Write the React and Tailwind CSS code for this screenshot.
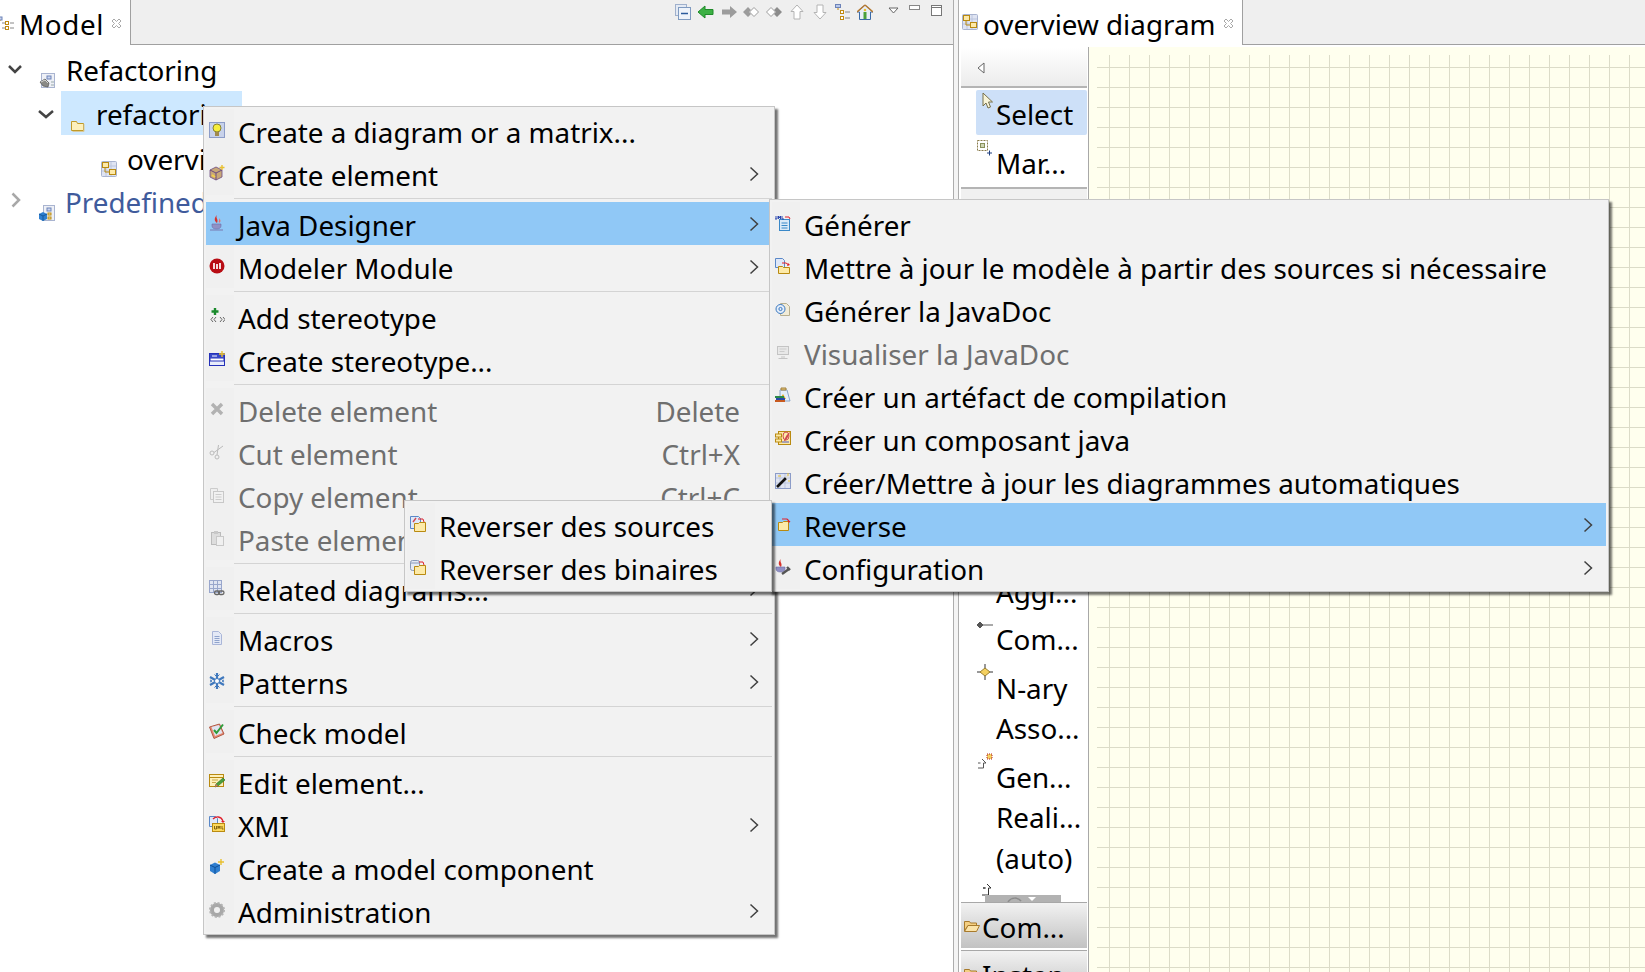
import React from 'react';

// small 16x16 icons, drawn by hand to follow the Modelio ones
const Svg = ({ s = 16, className = '', children }) => (
  <svg width={s} height={s} viewBox="0 0 16 16" className={'block shrink-0 ' + className}>{children}</svg>
);

const DiagramIcon = () => (
  <Svg>
    <rect x=".5" y=".5" width="15" height="15" rx="1" fill="#dfe4f2" stroke="#a9b4d0" />
    <path d="M5 1v14M10 1v14M1 5h14M1 10h14" stroke="#bcc6de" />
    <rect x="1.5" y="1.5" width="6" height="5" fill="#fde9a8" stroke="#b98a10" />
    <rect x="8.5" y="8.5" width="6" height="5" fill="#fde9a8" stroke="#b98a10" />
    <path d="M4 7v4h4" fill="none" stroke="#b98a10" />
  </Svg>
);
const ModelIcon = () => (
  <Svg>
    <rect x="2.5" y="1.5" width="13" height="14" fill="#eef0f6" stroke="#a9b4d0" />
    <rect x="8" y="4" width="4" height="3" fill="#cbd5ee" stroke="#6d83b8" />
    <path d="M1 10l5-3 4 4-1 4-5-1z" fill="#8a8a86" stroke="#555" strokeWidth=".7" />
    <path d="M2 10l4-2 3 3" fill="none" stroke="#d8d8d4" />
    <path d="M12 10h3M12 13h3" stroke="#9aa" />
  </Svg>
);
const PredefIcon = () => (
  <Svg>
    <rect x="4.5" y=".5" width="11" height="15" fill="#eef0f6" stroke="#a9b4d0" />
    <rect x="8" y="3" width="4" height="3" fill="#cbd5ee" stroke="#6d83b8" />
    <rect x="9" y="8" width="3" height="2" fill="#fde9a8" stroke="#b98a10" />
    <rect x="9" y="12" width="3" height="2" fill="#fde9a8" stroke="#b98a10" />
    <path d="M0 9l4-2 4 2v5l-4 2-4-2z" fill="#2f7fd0" />
    <path d="M0 9l4 2 4-2M4 11v5" fill="none" stroke="#155a9e" />
  </Svg>
);
const FolderIcon = ({ s = 16 }) => (
  <Svg s={s}>
    <path d="M1.5 4.5v9h12v-7h-6l-1-2z" fill="#fdf0bb" stroke="#c09a28" />
    <path d="M14 7v7.5H2.5" fill="none" stroke="#d8c998" />
  </Svg>
);
const OpenFolderIcon = () => (
  <Svg>
    <path d="M.5 3.500h5l1 1.500h6v2.500H4L.5 13z" fill="#f4cf82" stroke="#a87a2c" />
    <path d="M.5 13.500L4 7.500h11.500l-3 6z" fill="#fbe3a8" stroke="#a87a2c" />
  </Svg>
);
const ModelTabIcon = () => (
  <svg width="16" height="16" viewBox="0 0 16 16" className="block shrink-0">
    <rect x="-3" y="1" width="5" height="3" fill="#cbd5ee" stroke="#6d83b8" />
    <path d="M0 4v1" stroke="#c09a28" />
    <rect x="5.5" y="5.5" width="3" height="3" fill="#fff" stroke="#c08a10" />
    <rect x="5.5" y="10.5" width="3" height="3" fill="#fff" stroke="#c08a10" />
    <path d="M10 7h4M10 12h4M2 7h3M2 12h3" stroke="#888" />
  </svg>
);

const icons = {
  bulb: (
    <Svg>
      <rect x=".5" y=".5" width="15" height="15" fill="#c8d2ea" stroke="#8c9cc8" />
      <circle cx="8" cy="6" r="4" fill="#f6ee3c" stroke="#8a8330" />
      <rect x="6" y="10" width="4" height="4" fill="#a08a50" />
    </Svg>
  ),
  box: (
    <Svg>
      <path d="M1 5l6-3 6 3v7l-6 3-6-3z" fill="#c8a878" stroke="#6b4a80" strokeWidth=".8" />
      <path d="M1 5l6 3 6-3M7 8v7" fill="none" stroke="#6b4a80" />
      <path d="M3 10l3 2" stroke="#f4d04a" strokeWidth="2" />
      <path d="M13 0v5M10.5 2.5h5" stroke="#e8c030" strokeWidth="1.4" />
    </Svg>
  ),
  java: (
    <Svg>
      <path d="M8 0c-2 3 2 4 0 8-3-2-3-5 0-8z" fill="#d8322c" />
      <path d="M10 3c1 2-1 3 0 5 2-1 2-3 0-5z" fill="#e8736c" />
      <path d="M3 9h9v2c0 2-2 3-4.500 3S3 13 3 11z" fill="#9090c4" stroke="#6c6ca8" strokeWidth=".6" />
      <path d="M1 15h13" stroke="#7878b0" />
    </Svg>
  ),
  modeler: (
    <Svg>
      <circle cx="8" cy="8" r="7.500" fill="#b80d14" />
      <path d="M5 5v6M8 6v5M11 5v6" stroke="#fff" strokeWidth="1.700" />
    </Svg>
  ),
  addStereo: (
    <Svg>
      <path d="M6 0v7M2.500 3.500h7" stroke="#1a8a2c" strokeWidth="2.400" />
      <path d="M4 9l-2 2.500 2 2.500M7 9l-2 2.500 2 2.500M11 9l2 2.500-2 2.500M14 9l2 2.500-2 2.500" fill="none" stroke="#666" />
    </Svg>
  ),
  createStereo: (
    <Svg>
      <rect x=".5" y="2.500" width="15" height="12" fill="#e8ecfa" stroke="#2430b8" />
      <rect x="1" y="7" width="14" height="3" fill="#fff" stroke="#2430b8" />
      <rect x="1" y="3" width="14" height="4" fill="#3848c8" />
      <path d="M3 5h5" stroke="#fff" />
      <path d="M13 0v6M10 3h6" stroke="#e8c030" strokeWidth="1.400" />
    </Svg>
  ),
  del: <Svg><path d="M3 3l10 10M13 3L3 13" stroke="#b2b2b2" strokeWidth="3.400" /></Svg>,
  cut: (
    <Svg>
      <circle cx="3" cy="9" r="2" fill="none" stroke="#bbb" />
      <circle cx="8" cy="13" r="2" fill="none" stroke="#bbb" />
      <path d="M5 8.500L14 2M8 11L9.500 1" stroke="#bbb" />
    </Svg>
  ),
  copy: (
    <Svg>
      <path d="M1.500 1.500h7v3M1.500 1.500v11h3" fill="#eee" stroke="#ccc" />
      <rect x="4.500" y="4.500" width="10" height="11" fill="#f1f1f1" stroke="#c8c8c8" />
      <path d="M6.500 7.500h6M6.500 10h6M6.500 12.500h6" stroke="#ccc" />
    </Svg>
  ),
  paste: (
    <Svg>
      <rect x="2.500" y="2.500" width="9" height="12" fill="#ddd" stroke="#bbb" />
      <rect x="5" y="1" width="4" height="3" fill="#c8c8c8" />
      <rect x="7.500" y="6.500" width="7" height="9" fill="#f0f0f0" stroke="#c8c8c8" />
    </Svg>
  ),
  related: (
    <Svg>
      <rect x=".5" y=".5" width="12" height="12" fill="#dfe4f2" stroke="#98a6cc" />
      <path d="M4.500 1v11M8.500 1v11M1 4.500h11M1 8.500h11" stroke="#98a6cc" />
      <rect x="5.500" y="11" width="5" height="3.500" rx="1.700" fill="none" stroke="#666" strokeWidth="1.300" />
      <rect x="9.500" y="11" width="5.500" height="3.500" rx="1.700" fill="none" stroke="#666" strokeWidth="1.300" />
    </Svg>
  ),
  macros: (
    <Svg>
      <path d="M3.500 1.500h6l3 3v10h-9z" fill="#e4e9f6" stroke="#aab6d8" />
      <path d="M5.500 6.500h5M5.500 8.500h5M5.500 10.500h5M5.500 12.500h5" stroke="#8fa3cc" />
    </Svg>
  ),
  patterns: (
    <Svg>
      <path d="M8 0v16M1 4l14 8M15 4L1 12" stroke="#3f78bd" strokeWidth="2.200" />
      <circle cx="8" cy="8" r="2.500" fill="#fff" stroke="#3f78bd" />
      <path d="M5.500 1.500l2.500 2.500 2.500-2.500M5.500 14.500l2.500-2.500 2.500 2.500M1 7l2 1-2 1M15 7l-2 1 2 1" fill="none" stroke="#3f78bd" />
    </Svg>
  ),
  check: (
    <Svg>
      <path d="M.5 4l10-3 4.500 10-10 4.500z" fill="#e88a70" stroke="#b05a48" />
      <path d="M2.500 4l7.500-2 3.500 8-7.500 3z" fill="#dfe4f2" />
      <path d="M5 7l2.500 3L14 1.500" fill="none" stroke="#2f9d3a" strokeWidth="2" />
    </Svg>
  ),
  edit: (
    <Svg>
      <rect x=".5" y="1.500" width="14" height="12" fill="#fdf0bb" stroke="#b98a10" />
      <path d="M1 4.500h13" stroke="#b98a10" />
      <path d="M3 7h6M3 9.500h4" stroke="#c9a94a" />
      <path d="M6 14l1-3 7-6 2 2-7 6z" fill="#4aa03c" stroke="#2c6a24" strokeWidth=".6" />
      <path d="M6 14l1-3 2 2z" fill="#e87060" />
    </Svg>
  ),
  xmi: (
    <Svg>
      <path d="M.5.500h6l2 2v8h-8z" fill="#dfe8f8" stroke="#5a88c8" />
      <path d="M4 3c3-3 8-3 10 2" fill="none" stroke="#e0202c" strokeWidth="1.300" />
      <path d="M12 5h4l-2 2z" fill="#e0202c" />
      <rect x="3.500" y="7.500" width="12" height="8" fill="#fcd85c" stroke="#b98a10" />
      <path d="M5.500 10v3h2v-3M9 13v-3l1 2 1-2v3M13 10v3h1.500" fill="none" stroke="#7a5a08" strokeWidth=".9" />
    </Svg>
  ),
  comp: (
    <Svg>
      <path d="M1 6l5-2.500L11 6v6l-5 3-5-3z" fill="#2f7fd0" />
      <path d="M1 6l5 2.500L11 6M6 8.500V15" fill="none" stroke="#0f5098" />
      <path d="M12 0v6M9 3h6" stroke="#e8c030" strokeWidth="1.400" />
    </Svg>
  ),
  admin: (
    <Svg>
      <circle cx="8" cy="8" r="5" fill="none" stroke="#a8a8a8" strokeWidth="4" />
      <circle cx="8" cy="8" r="7" fill="none" stroke="#b4b4b4" strokeWidth="2" strokeDasharray="2 1.700" />
      <circle cx="8" cy="8" r="2.500" fill="#f0f0f0" />
    </Svg>
  ),
  gen: (
    <Svg>
      <rect x="4.500" y="4.500" width="10" height="11" fill="#dbe9f8" stroke="#3a88c8" />
      <path d="M6.500 8h6M6.500 10.500h6M6.500 13h6" stroke="#3a88c8" />
      <path d="M0 1v3h2V1M3.500 4V1l1 2 1-2v3M7 1v3h2" fill="none" stroke="#1838a8" strokeWidth=".9" />
      <path d="M10 2h4l1 2" fill="none" stroke="#e0202c" />
    </Svg>
  ),
  update: (
    <Svg>
      <path d="M.5.500h7l2 2v7h-9z" fill="#dfe8f8" stroke="#5a88c8" />
      <path d="M7 5h4l3 2" fill="none" stroke="#e0202c" />
      <path d="M13 5l2 2-3 1z" fill="#e0202c" />
      <path d="M3.500 8.500h4l1 1h6v6h-11z" fill="#fdeaa8" stroke="#b98a10" />
    </Svg>
  ),
  javadoc: (
    <Svg>
      <path d="M5.500 2.500h6l3 3v9h-9z" fill="#f2ecd8" stroke="#b8b090" />
      <circle cx="5.500" cy="8" r="4.500" fill="#e4eefa" stroke="#3a78c0" />
      <circle cx="5.500" cy="8" r="1.600" fill="none" stroke="#3a78c0" />
    </Svg>
  ),
  view: (
    <Svg>
      <rect x="2.500" y="2.500" width="11" height="8" fill="#e8e8e8" stroke="#c4c4c4" />
      <path d="M4.500 5h7M4.500 7.500h5" stroke="#ccc" />
      <path d="M6 13h4M3.500 14.500h9" stroke="#c4c4c4" />
    </Svg>
  ),
  artifact: (
    <Svg>
      <path d="M5 3h7l3 11H5z" fill="#e4eefa" stroke="#8aa4c8" />
      <path d="M6 1h5v2H6z" fill="#e8c878" stroke="#a08040" />
      <path d="M8 7l3 5H5z" fill="#e8a820" />
      <rect x="0" y="9" width="9" height="2" fill="#2a8a4a" />
      <rect x="1" y="11" width="9" height="2" fill="#2848a8" />
      <rect x="0" y="13" width="10" height="2" fill="#c85a20" />
    </Svg>
  ),
  javaComp: (
    <Svg>
      <rect x="3.500" y="1.500" width="12" height="13" fill="#fdeaa8" stroke="#b98a10" />
      <rect x=".5" y="4" width="6" height="3" fill="#fdeaa8" stroke="#b98a10" />
      <rect x=".5" y="9" width="6" height="3" fill="#fdeaa8" stroke="#b98a10" />
      <path d="M9 11c1-4 3-7 6-9-1 3-2 6-5 9z" fill="#d04a50" />
      <ellipse cx="11" cy="6" rx="3" ry="4" fill="none" stroke="#d04a50" />
      <path d="M7 12h7" stroke="#8080b8" strokeWidth="1.400" />
    </Svg>
  ),
  wizard: (
    <Svg>
      <rect x=".5" y=".5" width="15" height="15" fill="#dfe4f2" stroke="#8c9cc8" />
      <path d="M5 1v14M10 1v14M1 5h14M1 10h14" stroke="#bcc6de" />
      <path d="M2 14L11 5" stroke="#111" strokeWidth="2.600" />
      <path d="M11 5l2-2" stroke="#ddd" strokeWidth="2.600" />
      <path d="M13 0v3M3 3h3M14 7v2" stroke="#e8c030" />
    </Svg>
  ),
  reverse: (
    <Svg>
      <path d="M3.500 6.500h4l1-1h5v9h-10z" fill="#fdeaa8" stroke="#b98a10" />
      <path d="M7 3h5l2 2" fill="none" stroke="#e0202c" strokeWidth="1.200" />
      <path d="M12.500 5h3l-1.500 2z" fill="#e0202c" />
    </Svg>
  ),
  config: (
    <Svg>
      <path d="M6 0c-2 3 2 4 0 8-3-2-3-5 0-8z" fill="#d8322c" />
      <path d="M1 8h9v2c0 2-2 3-4.500 3S1 12 1 10z" fill="#9090c4" stroke="#6c6ca8" strokeWidth=".6" />
      <path d="M7 15l7-5" stroke="#555" strokeWidth="2.400" />
      <path d="M12 8l3 3" stroke="#555" strokeWidth="2.400" />
    </Svg>
  ),
  revSrc: (
    <Svg>
      <path d="M.5.500h8l2 2v10h-10z" fill="#dfe8f8" stroke="#5a88c8" />
      <path d="M3 6l3-4" stroke="#d04a50" strokeWidth="1.400" />
      <path d="M4.500 7.500h4l1-1h6v9h-11z" fill="#fdeaa8" stroke="#b98a10" />
      <path d="M8 3h5l1 3" fill="none" stroke="#e0202c" />
    </Svg>
  ),
  revBin: (
    <Svg>
      <rect x=".5" y="1.500" width="9" height="10" rx="2" fill="#e4eaf4" stroke="#8a9ab8" />
      <path d="M.5 4h9" stroke="#8a9ab8" />
      <path d="M4.500 7.500h4l1-1h6v9h-11z" fill="#fdeaa8" stroke="#b98a10" />
      <path d="M9 3h4l1 3" fill="none" stroke="#e0202c" />
    </Svg>
  ),
};

const Chevron = () => (
  <svg width="10" height="16" viewBox="0 0 10 16" className="block shrink-0">
    <path d="M1.500 1.500L8.500 8l-7 6.500" fill="none" stroke="#404040" strokeWidth="1.500" />
  </svg>
);

const CloseX = () => (
  <svg width="11" height="11" viewBox="0 0 11 11" className="block shrink-0">
    <path d="M1 3l2-2 2.500 2.500L8 1l2 2-2.500 2.500L10 8l-2 2-2.500-2.500L3 10 1 8l2.500-2.500z" fill="#fff" stroke="#a8a8a8" />
  </svg>
);

function MenuRow({ icon, label, hint, arrow, off, active }) {
  return (
    <div className={'flex h-[43px] items-stretch ' + (active ? 'bg-[#90c8f6]' : '')}>
      <div className={'w-[28px] shrink-0 pl-[3px] pt-[13px] ' + (active ? '' : 'bg-[#f0f0f0]')}>{icons[icon]}</div>
      <div className={'pl-[4px] leading-[43px] whitespace-nowrap pt-[2px] ' + (off ? 'text-[#6f6f6f]' : 'text-black')}>{label}</div>
      {hint && <div className="ml-auto mr-[32px] leading-[43px] pt-[2px] text-[#6f6f6f] whitespace-nowrap">{hint}</div>}
      {arrow && <div className="ml-auto mr-[13px] pt-[14px]"><Chevron /></div>}
    </div>
  );
}

const MenuSep = () => (
  <div className="h-[7px] pl-[28px] pt-[3px]">
    <div className="h-px bg-[#d4d4d4]" />
  </div>
);

const mainMenu = [
  { icon: 'bulb', label: 'Create a diagram or a matrix...' },
  { icon: 'box', label: 'Create element', arrow: true },
  null,
  { icon: 'java', label: 'Java Designer', arrow: true, active: true },
  { icon: 'modeler', label: 'Modeler Module', arrow: true },
  null,
  { icon: 'addStereo', label: 'Add stereotype' },
  { icon: 'createStereo', label: 'Create stereotype...' },
  null,
  { icon: 'del', label: 'Delete element', off: true, hint: 'Delete' },
  { icon: 'cut', label: 'Cut element', off: true, hint: 'Ctrl+X' },
  { icon: 'copy', label: 'Copy element', off: true, hint: 'Ctrl+C' },
  { icon: 'paste', label: 'Paste element', off: true, hint: 'Ctrl+V' },
  null,
  { icon: 'related', label: 'Related diagrams...', arrow: true },
  null,
  { icon: 'macros', label: 'Macros', arrow: true },
  { icon: 'patterns', label: 'Patterns', arrow: true },
  null,
  { icon: 'check', label: 'Check model' },
  null,
  { icon: 'edit', label: 'Edit element...' },
  { icon: 'xmi', label: 'XMI', arrow: true },
  { icon: 'comp', label: 'Create a model component' },
  { icon: 'admin', label: 'Administration', arrow: true },
];

const javaMenu = [
  { icon: 'gen', label: 'Générer' },
  { icon: 'update', label: 'Mettre à jour le modèle à partir des sources si nécessaire' },
  { icon: 'javadoc', label: 'Générer la JavaDoc' },
  { icon: 'view', label: 'Visualiser la JavaDoc', off: true },
  { icon: 'artifact', label: 'Créer un artéfact de compilation' },
  { icon: 'javaComp', label: 'Créer un composant java' },
  { icon: 'wizard', label: 'Créer/Mettre à jour les diagrammes automatiques' },
  { icon: 'reverse', label: 'Reverse', arrow: true, active: true },
  { icon: 'config', label: 'Configuration', arrow: true },
];

const menuBox = 'absolute bg-[#f2f2f2] border border-[#c6c6c6] p-[2px] shadow-[3px_3px_2px_rgba(0,0,0,0.55)]';

const toolbarIcons = [
  <svg key="c" width="16" height="16" viewBox="0 0 16 16"><rect x=".5" y=".5" width="11" height="11" fill="#e4eaf4" stroke="#9fb0cc" /><rect x="3.500" y="3.500" width="12" height="12" fill="#eef3fa" stroke="#7f9ac0" /><path d="M6 9.500h7" stroke="#2a5a9c" strokeWidth="1.500" /></svg>,
  <svg key="b" width="16" height="16" viewBox="0 0 16 16"><path d="M0 8l7-6v3.500h8v5H7V14z" fill="#3cb043" stroke="#1f8a2a" /></svg>,
  <svg key="f" width="16" height="16" viewBox="0 0 16 16"><path d="M16 8L9 2v3.500H1v5h8V14z" fill="#9c9c9c" /></svg>,
  <svg key="p" width="16" height="16" viewBox="0 0 16 16"><path d="M5 3L0 8l5 5 3-3-2-2 2-2z" fill="#9c9c9c" /><path d="M11 3.500L15.500 8 11 12.500 6.500 8z" fill="#fff" stroke="#9c9c9c" /></svg>,
  <svg key="n" width="16" height="16" viewBox="0 0 16 16"><path d="M5 3.500L.5 8 5 12.500 9.500 8z" fill="#fff" stroke="#9c9c9c" /><path d="M11 3l5 5-5 5-3-3 2-2-2-2z" fill="#8c8c8c" /></svg>,
  <svg key="u" width="16" height="16" viewBox="0 0 16 16"><path d="M8 1l6 6.500h-3v7.500H5V7.500H2z" fill="#fff" stroke="#b4b4b4" /></svg>,
  <svg key="d" width="16" height="16" viewBox="0 0 16 16"><path d="M8 15L2 8.500h3V1h6v7.500h3z" fill="#fff" stroke="#b4b4b4" /></svg>,
  <svg key="t" width="16" height="16" viewBox="0 0 16 16"><rect x=".5" y=".5" width="5" height="3" fill="#b8c8ea" stroke="#6d83b8" /><rect x="5.500" y="6.500" width="3" height="3" fill="#fff" stroke="#c08a10" /><rect x="5.500" y="12.500" width="3" height="3" fill="#fff" stroke="#c08a10" /><path d="M10 8h5M10 14h5" stroke="#888" /><path d="M3 4v2" stroke="#c08a10" /></svg>,
  <svg key="h" width="16" height="16" viewBox="0 0 16 16"><path d="M8 1L0 8h2.500v7.500h11V8H16z" fill="#e8eef8" stroke="#3a6aa8" /><path d="M8 1L0 8" stroke="#b87a30" strokeWidth="1.400" /><path d="M8 1l8 7" stroke="#b87a30" strokeWidth="1.400" /><rect x="6.500" y="8" width="3" height="7" fill="#4aa03c" /><circle cx="8" cy="6" r="1.300" fill="#e8c030" /></svg>,
];

const PaletteText = ({ children, mt = '' }) => <div className={'pl-[35px] leading-[43px] ' + mt}>{children}</div>;

export default function App() {
  return (
    <div className="relative flex h-[972px] w-[1645px] overflow-hidden bg-white font-['Noto_Sans',sans-serif] text-[27.8px] text-black">
      {/* left view */}
      <div className="flex w-[954px] shrink-0 flex-col border-r border-[#adadad]">
        <div className="flex h-[45px] shrink-0">
          <div className="flex w-[131px] items-start border-r border-[#a0a0a0] pt-[2px]">
            <div className="pt-[14px]"><ModelTabIcon /></div>
            <div className="ml-[3px] tracking-[0.6px] leading-[44px]">Model</div>
            <div className="ml-[7px] pt-[16px]"><CloseX /></div>
          </div>
          <div className="flex flex-1 items-start gap-[6.8px] border-b border-[#a0a0a0] bg-[#efefef] pl-[544px] pt-[4px]">
            {toolbarIcons}
            <svg width="12" height="8" viewBox="0 0 12 8" className="ml-[8px] mt-[3px]"><path d="M1 1h9L5.500 6z" fill="#fff" stroke="#666" /></svg>
            <svg width="12" height="8" viewBox="0 0 12 8" className="ml-[2px]"><rect x=".5" y="1.500" width="10" height="4" fill="#fff" stroke="#888" /></svg>
            <svg width="12" height="12" viewBox="0 0 12 12" className="ml-[3px] mt-[1px]"><rect x=".5" y=".5" width="10" height="10" fill="#fff" stroke="#777" /><path d="M1 2.500h9" stroke="#777" /></svg>
          </div>
        </div>
        <div className="pt-[2px]">
          <div className="flex h-[44px]">
            <div className="pl-[8px] pt-[18px]"><svg width="14" height="9" viewBox="0 0 14 9"><path d="M1 1l6 6 6-6" fill="none" stroke="#444" strokeWidth="2.500" /></svg></div>
            <div className="ml-[17px] pt-[25px]"><ModelIcon /></div>
            <div className="ml-[11px] pt-[1px] leading-[44px]">Refactoring</div>
          </div>
          <div className="flex h-[44px]">
            <div className="pl-[38px] pt-[19px]"><svg width="16" height="9" viewBox="0 0 16 9"><path d="M1 1l7 6 7-6" fill="none" stroke="#444" strokeWidth="2.500" /></svg></div>
            <div className="ml-[7px] flex w-[181px] bg-[#cde8ff]">
              <div className="pl-[9px] pt-[26px]"><FolderIcon /></div>
              <div className="ml-[10px] pt-[1px] leading-[44px]">refactoring</div>
            </div>
          </div>
          <div className="flex h-[44px] pl-[101px]">
            <div className="pt-[26px]"><DiagramIcon /></div>
            <div className="ml-[10px] pt-[2px] leading-[44px]">overview diagram</div>
          </div>
          <div className="flex h-[44px]">
            <div className="pl-[11px] pt-[13px]"><svg width="10" height="16" viewBox="0 0 10 16"><path d="M1.500 1.500L8 8l-6.500 6.500" fill="none" stroke="#a8a8a8" strokeWidth="2.500" /></svg></div>
            <div className="ml-[18px] pt-[26px]"><PredefIcon /></div>
            <div className="ml-[10px] pt-[1px] leading-[44px] text-[#3f5b9c]">Predefined types</div>
          </div>
        </div>
      </div>

      <div className="w-[4px] shrink-0 bg-[#f4f4f4]" />

      {/* right view */}
      <div className="flex min-w-0 flex-1 flex-col border-l border-[#adadad]">
        <div className="flex h-[45px] shrink-0">
          <div className="flex w-[284px] items-start border-r border-[#a0a0a0] pt-[2px]">
            <div className="pl-[3px] pt-[12px]"><DiagramIcon /></div>
            <div className="ml-[5px] whitespace-nowrap leading-[44px]">overview diagram</div>
            <div className="ml-auto mr-[8px] pt-[16px]"><CloseX /></div>
          </div>
          <div className="flex-1 border-b border-[#a0a0a0] bg-[#efefef]" />
        </div>
        <div className="flex min-h-0 flex-1 pt-[2px]">
          {/* palette */}
          <div className="flex w-[130px] shrink-0 flex-col border-r border-[#a8a8a8] pl-[2px] pr-[1px]">
            <div className="flex h-[41px] shrink-0 items-center border-b-2 border-[#b4b4b4] bg-linear-to-b from-white to-[#ececec] pl-[16px] pt-[2px]">
              <svg width="8" height="12" viewBox="0 0 8 12"><path d="M7 1L1 6l6 5z" fill="#fff" stroke="#666" /></svg>
            </div>
            <div className="relative ml-[15px] mt-[2px] h-[45px] shrink-0 rounded-[2px] bg-[#cde0f8] pl-[20px] pt-[3px] leading-[43px]">
              <svg width="13" height="17" viewBox="0 0 13 17" className="absolute left-[6px] top-[2px]"><path d="M1 1v13l3-3 2 5 2.500-1-2-5h4z" fill="#f8f4d8" stroke="#77704a" /></svg>
              Select
            </div>
            <div className="relative h-[52px] shrink-0 pl-[35px] pt-[7px] leading-[43px]">
              <svg width="16" height="16" viewBox="0 0 16 16" className="absolute left-[16px] top-[5px]"><rect x=".5" y=".5" width="10" height="10" fill="none" stroke="#887a4a" strokeDasharray="2 1" /><rect x="3.500" y="3.500" width="4" height="4" fill="#cfd4b4" stroke="#88905a" /><path d="M10 13h5M12.500 10.500v5" stroke="#1f3f7f" /></svg>
              Mar...
            </div>
            <div className="h-[2px] shrink-0 bg-[#b4b4b4]" />
            <div className="h-[378px] shrink-0 bg-[#f0f0f0]" />
            <div className="flex min-h-0 flex-1 flex-col">
              <PaletteText mt="mt-[4px]">Aggr...</PaletteText>
              <div className="relative">
                <svg width="16" height="8" viewBox="0 0 16 8" className="absolute left-[16px] top-[7px]"><path d="M3 1l3 3-3 3-3-3zM5 4h11" fill="#555" stroke="#555" /></svg>
                <PaletteText mt="mt-[4px]">Com...</PaletteText>
              </div>
              <div className="relative">
                <svg width="16" height="16" viewBox="0 0 16 16" className="absolute left-[16px] top-[3px]"><path d="M8 0v16M0 8h16" stroke="#333" /><path d="M8 4l5 4-5 4-5-4z" fill="#f4d060" stroke="#9a8030" /></svg>
                <PaletteText mt="mt-[6px]">N-ary</PaletteText>
              </div>
              <PaletteText mt="-mt-[3px]">Asso...</PaletteText>
              <div className="relative">
                <svg width="16" height="16" viewBox="0 0 16 16" className="absolute left-[16px] top-[3px]"><path d="M5 6l4 4H6.500v5H1M3.500 10H1" fill="#fff" stroke="#555" /><rect x="10" y="1" width="5" height="5" fill="#f4d060" stroke="#b02020" strokeDasharray="1 1" /></svg>
                <PaletteText mt="mt-[6px]">Gen...</PaletteText>
              </div>
              <PaletteText mt="-mt-[3px]">Reali...</PaletteText>
              <PaletteText mt="-mt-[2px]">(auto)</PaletteText>
              <div className="relative h-[22px] shrink-0">
                <svg width="12" height="14" viewBox="0 0 12 14" className="absolute left-[20px] top-[3px]"><path d="M6 1l4 4H7.500v7H1M4.500 5H2z" fill="#fff" stroke="#333" /></svg>
                <div className="absolute bottom-[0px] left-[24px] flex h-[7px] w-[76px] justify-center overflow-hidden bg-[#b2b2b2]">
                  <svg width="50" height="7" viewBox="0 0 50 7"><path d="M10 7c3-5 10-5 13-1" fill="none" stroke="#8c8c8c" strokeWidth="1.500" /><path d="M30 2h8l-4 4z" fill="#fff" /></svg>
                </div>
              </div>
              <div className="flex h-[46px] shrink-0 items-start border-t border-[#a8a8a8] bg-linear-to-b from-[#f2f2f2] to-[#c2c2c2] pl-[3px]">
                <div className="pt-[15px]"><OpenFolderIcon /></div>
                <div className="ml-[2px] pt-[3px] leading-[43px]">Com...</div>
              </div>
              <div className="mt-[2px] flex h-[47px] shrink-0 items-start border-t border-[#a8a8a8] bg-linear-to-b from-[#f2f2f2] to-[#c2c2c2] pl-[3px]">
                <div className="pt-[15px]"><OpenFolderIcon /></div>
                <div className="ml-[2px] pt-[3px] leading-[43px]">Instan...</div>
              </div>
            </div>
          </div>
          {/* canvas */}
          <div className="flex-1 bg-[#ffffee] pl-[8px] pt-[8px]">
            <div className="h-full w-full bg-[linear-gradient(to_right,#dcdcc8_1px,transparent_1px),linear-gradient(to_bottom,#dcdcc8_1px,transparent_1px)] bg-[size:20px_20px] bg-[position:12px_12px]" />
          </div>
        </div>
      </div>

      {/* context menu with its two open cascades */}
      <div className={menuBox + ' left-[203px] top-[106px] w-[572px]'}>
        {mainMenu.map((m, i) => (m ? <MenuRow key={i} {...m} /> : <MenuSep key={i} />))}
      </div>
      <div className={menuBox + ' left-[769px] top-[199px] w-[840px]'}>
        {javaMenu.map((m, i) => <MenuRow key={i} {...m} />)}
      </div>
      <div className={menuBox + ' left-[404px] top-[500px] w-[368px]'}>
        <MenuRow icon="revSrc" label="Reverser des sources" />
        <MenuRow icon="revBin" label="Reverser des binaires" />
      </div>
    </div>
  );
}
